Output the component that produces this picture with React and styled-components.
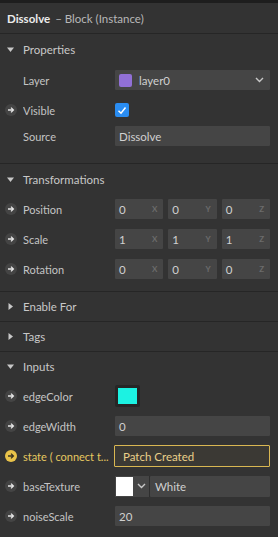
import React from 'react';
import styled, { createGlobalStyle } from 'styled-components';

const GlobalStyle = createGlobalStyle`
  html, body {
    margin: 0;
    padding: 0;
    background: #333333;
  }
  body {
    font-family: Lato, "Open Sans", sans-serif;
    font-size: 11px;
    color: #c4c4c4;
  }
`;

const Panel = styled.div`
  width: 278px;
  height: 537px;
  overflow: hidden;
  background: #333333;
  border-top: 3px solid #1e1e1e;
  box-sizing: border-box;
`;

const Header = styled.div`
  display: flex;
  align-items: center;
  height: 30px;
  padding-left: 7px;
  border-bottom: 1px solid #262626;
  gap: 5px;
  font-size: 11.5px;
`;

const Title = styled.span`
  font-weight: 700;
  color: #ececec;
`;

const Subtitle = styled.span`
  color: #b8b8b8;
`;

const Section = styled.div`
  border-bottom: ${(p) => (p.last ? 'none' : '1px solid #262626')};
  padding-bottom: ${(p) => p.pad || 0}px;
`;

const SectionHead = styled.div`
  display: flex;
  align-items: center;
  height: ${(p) => p.h || 30}px;
  color: #c8c8c8;
  font-size: 11.5px;
`;

const Caret = styled.span`
  width: 23px;
  display: flex;
  justify-content: center;
  padding-right: 2px;
  box-sizing: border-box;
`;

const Row = styled.div`
  display: flex;
  align-items: center;
  height: ${(p) => p.h || 30}px;
`;

const Port = styled.span`
  width: 23px;
  display: flex;
  align-items: center;
  padding-left: 5px;
  box-sizing: border-box;
`;

const PortDot = styled.span`
  width: 12px;
  height: 12px;
  border-radius: 50%;
  background: ${(p) => (p.active ? '#e9c34a' : '#444444')};
  display: flex;
  align-items: center;
  justify-content: center;
`;

const Label = styled.span`
  width: 92px;
  white-space: nowrap;
  overflow: hidden;
  color: ${(p) => (p.active ? '#e6c860' : '#c4c4c4')};
`;

const Field = styled.div`
  flex: 1;
  margin-right: 8px;
  display: flex;
  gap: 5px;
`;

const Input = styled.div`
  flex: 1;
  height: 20px;
  background: ${(p) => (p.active ? '#3b3934' : '#454545')};
  border: ${(p) => (p.active ? '1px solid #d9b752' : 'none')};
  color: ${(p) => (p.active ? '#ead08a' : '#d0d0d0')};
  display: flex;
  align-items: center;
  justify-content: space-between;
  padding: 0 ${(p) => (p.active ? 10 : 4)}px 0 ${(p) => (p.active ? 8 : 4)}px;
  border-radius: 1px;
  margin-left: ${(p) => (p.active ? -1 : 0)}px;
  font-size: 11.5px;
`;

const Axis = styled.span`
  font-size: 8px;
  font-weight: 700;
  color: #6b6b6b;
  margin-right: 2px;
`;

const Select = styled(Input)`
  justify-content: flex-start;
  gap: 7px;
  padding-right: 6px;
`;

const Swatch = styled.span`
  width: 13px;
  height: 13px;
  border-radius: 2px;
  background: ${(p) => p.color};
`;

const Grow = styled.span`
  flex: 1;
`;

const Check = styled.span`
  width: 14px;
  height: 14px;
  border-radius: 2px;
  background: #2a8df2;
  display: flex;
  align-items: center;
  justify-content: center;
`;

const ColorWell = styled.div`
  width: 25px;
  height: 22px;
  box-sizing: border-box;
  background: #262626;
  border: 3px solid #262626;
  border-radius: 2px;
`;

const ColorFill = styled.div`
  width: 100%;
  height: 100%;
  background: ${(p) => p.color};
`;

const TexturePick = styled.div`
  display: flex;
  align-items: center;
  height: 21px;
  background: #454545;
  padding-left: 1px;
  border-right: 1px solid #2e2e2e;
`;

const TextureSwatch = styled.span`
  width: 17px;
  height: 19px;
  background: #ffffff;
`;

const TextureChevron = styled.span`
  width: 16px;
  display: flex;
  justify-content: center;
`;

const TextureName = styled(Input)`
  height: 21px;
  padding-left: 5px;
  margin-left: -5px;
`;

const Arrow = ({ dark }) => (
  <svg width="8" height="8" viewBox="0 0 8 8">
    <path
      d="M1 4h5.2M4 1.6 6.4 4 4 6.4"
      stroke={dark ? '#3a3320' : '#e6e6e6'}
      strokeWidth="1.3"
      fill="none"
    />
  </svg>
);

const Chevron = () => (
  <svg width="9" height="6" viewBox="0 0 9 6">
    <path d="M1 1l3.5 3.5L8 1" stroke="#c8c8c8" strokeWidth="1.4" fill="none" />
  </svg>
);

const Triangle = ({ open }) => (
  <svg width="7" height="7" viewBox="0 0 7 7">
    {open ? <path d="M0 1.5h7L3.5 6z" fill="#c8c8c8" /> : <path d="M1.5 0v7L6 3.5z" fill="#c8c8c8" />}
  </svg>
);

const Head = ({ open, h, children }) => (
  <SectionHead h={h}>
    <Caret>
      <Triangle open={open} />
    </Caret>
    {children}
  </SectionHead>
);

const Prop = ({ port, active, label, h, children }) => (
  <Row h={h}>
    <Port>
      {port && (
        <PortDot active={active}>
          <Arrow dark={active} />
        </PortDot>
      )}
    </Port>
    <Label active={active}>{label}</Label>
    <Field>{children}</Field>
  </Row>
);

const Vec = ({ values }) =>
  ['X', 'Y', 'Z'].map((a, i) => (
    <Input key={a}>
      {values[i]}
      <Axis>{a}</Axis>
    </Input>
  ));

export default function App() {
  return (
    <Panel>
      <GlobalStyle />
      <Header>
        <Title>Dissolve</Title>
        <Subtitle>– Block (Instance)</Subtitle>
      </Header>

      <Section pad={16}>
        <Head open h={31}>Properties</Head>
        <Prop label="Layer">
          <Select>
            <Swatch color="#9170d6" />
            layer0
            <Grow />
            <Chevron />
          </Select>
        </Prop>
        <Prop port label="Visible">
          <Check>
            <svg width="10" height="9" viewBox="0 0 10 9">
              <path d="M1.5 4.8 4 7.2 8.5 1.5" stroke="#fff" strokeWidth="1.5" fill="none" />
            </svg>
          </Check>
        </Prop>
        <Prop label="Source" h={22}>
          <Input>Dissolve</Input>
        </Prop>
      </Section>

      <Section pad={7}>
        <Head open>Transformations</Head>
        <Prop port label="Position">
          <Vec values={[0, 0, 0]} />
        </Prop>
        <Prop port label="Scale">
          <Vec values={[1, 1, 1]} />
        </Prop>
        <Prop port label="Rotation">
          <Vec values={[0, 0, 0]} />
        </Prop>
      </Section>

      <Section>
        <Head h={29}>Enable For</Head>
      </Section>
      <Section>
        <Head h={29}>Tags</Head>
      </Section>

      <Section last>
        <Head open h={29}>Inputs</Head>
        <Prop port label="edgeColor">
          <ColorWell>
            <ColorFill color="#1cf2e2" />
          </ColorWell>
        </Prop>
        <Prop port label="edgeWidth">
          <Input>0</Input>
        </Prop>
        <Prop port active label="state ( connect t...">
          <Input active>Patch Created</Input>
        </Prop>
        <Prop port label="baseTexture">
          <TexturePick>
            <TextureSwatch />
            <TextureChevron>
              <Chevron />
            </TextureChevron>
          </TexturePick>
          <TextureName>White</TextureName>
        </Prop>
        <Prop port label="noiseScale">
          <Input>20</Input>
        </Prop>
      </Section>
    </Panel>
  );
}
